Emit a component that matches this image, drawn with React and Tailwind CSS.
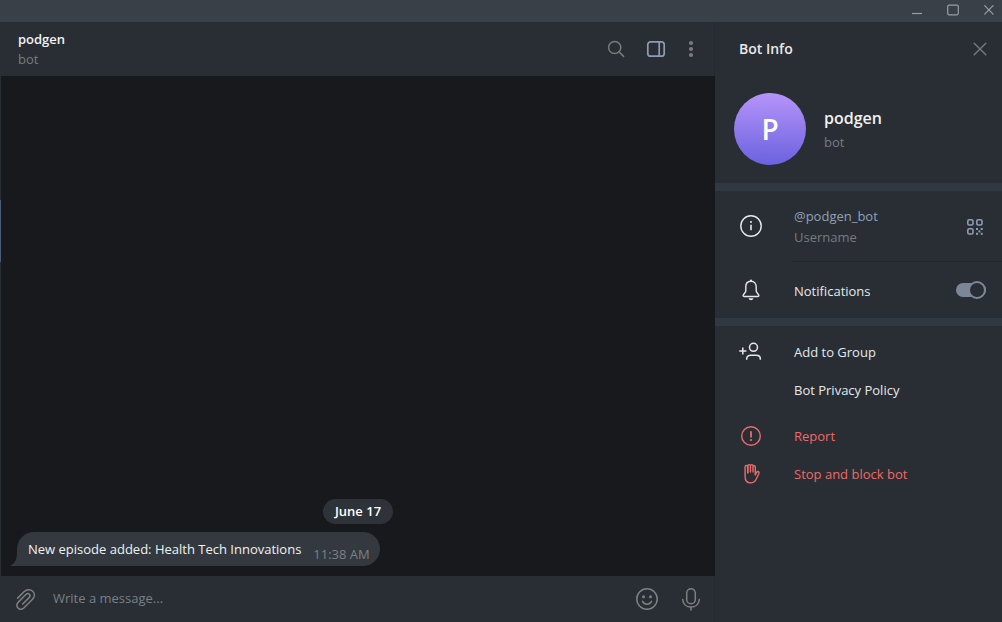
function Icon({ size = 24, className = "", children, strokeWidth = 1.4 }) {
  return (
    <svg
      width={size}
      height={size}
      viewBox={`0 0 ${size} ${size}`}
      fill="none"
      stroke="currentColor"
      strokeWidth={strokeWidth}
      strokeLinecap="round"
      strokeLinejoin="round"
      aria-hidden="true"
      className={`shrink-0 ${className}`}
    >
      {children}
    </svg>
  );
}

function TitleBar() {
  return (
    <div className="flex h-[22px] shrink-0 items-center justify-end gap-3 bg-[#3a4047] pr-px text-[#9a9ea3]">
      <button type="button" aria-label="Minimize" className="flex">
        <Icon strokeWidth={1.2}>
          <path d="M7 14.5h10" strokeLinecap="butt" />
        </Icon>
      </button>
      <button type="button" aria-label="Maximize" className="flex">
        <Icon strokeWidth={1.2}>
          <rect x="6.7" y="6.2" width="10.6" height="9.6" rx="1.2" />
        </Icon>
      </button>
      <button type="button" aria-label="Close window" className="flex">
        <Icon strokeWidth={1.2}>
          <path d="M7.7 6.7l8.4 8.4M16.1 6.7l-8.4 8.4" />
        </Icon>
      </button>
    </div>
  );
}

function ChatHeader() {
  return (
    <header className="flex h-[54px] shrink-0 items-center justify-between border-r border-[#24292d] bg-[#282e33] pr-[11px] pl-[17px]">
      <div className="text-[13px] leading-5">
        <h1 className="font-semibold text-[#f2f3f4]">podgen</h1>
        <p className="text-[#767c80]">bot</p>
      </div>
      <div className="flex items-center text-[#797c7f]">
        <button type="button" aria-label="Search" className="mr-4 flex">
          <Icon strokeWidth={1.5}>
            <circle cx="10.7" cy="10.5" r="6.1" />
            <path d="M15.2 15l4.4 4.4" />
          </Icon>
        </button>
        <button type="button" aria-label="Toggle info panel" className="mr-[11px] flex text-[#8b9db5]">
          <Icon strokeWidth={1.7}>
            <rect x="3.8" y="4.8" width="16.4" height="14.4" rx="2.8" />
            <path d="M15.2 4.8v14.4" />
          </Icon>
        </button>
        <button type="button" aria-label="More" className="flex">
          <Icon>
            <g fill="currentColor" stroke="none">
              <circle cx="12" cy="6" r="2.1" />
              <circle cx="12" cy="12" r="2.1" />
              <circle cx="12" cy="18" r="2.1" />
            </g>
          </Icon>
        </button>
      </div>
    </header>
  );
}

function Messages() {
  return (
    <main className="flex min-h-0 flex-1 flex-col justify-end bg-[#18191d] pr-4 pb-[10px] pl-4">
      <time className="mb-2 self-center rounded-full bg-[#2d3338] px-3 text-[13px] leading-[25px] font-semibold text-white">
        June 17
      </time>
      <div className="relative flex h-[34px] items-start self-start rounded-r-[17px] rounded-tl-[17px] bg-[#33393f] pt-[7px] pr-[10px] pl-[11px] text-[13px] leading-5">
        <svg
          width="7"
          height="18"
          viewBox="0 0 7 18"
          aria-hidden="true"
          className="absolute bottom-0 -left-[6px] text-[#33393f]"
        >
          <path d="M6 0V18H0.6C-0.2 18 -0.2 17.3 0.5 16.9C4.4 14.6 6 11 6 4H7V18H6Z" fill="currentColor" />
        </svg>
        <p className="text-[#f0f1f2]">New episode added: Health Tech Innovations</p>
        <time className="ml-3 pt-[5px] text-[#7a8085]">11:38 AM</time>
      </div>
    </main>
  );
}

function Composer() {
  return (
    <form className="flex h-[46px] shrink-0 items-center border-r border-[#24292d] bg-[#282e33] pr-[11px] pl-3 text-[#7e8183]">
      <button type="button" aria-label="Attach file" className="mr-4 flex">
        <Icon strokeWidth={1.5}>
          <path
            transform="translate(0.4 1.1)"
            d="M4.2 10L10.6 3.6C13.4 1 17.3 1.1 19.3 3.2C21.8 5.7 21.2 9 19.1 11.1L10.6 19.6C8.7 21.4 6.2 21.5 4.6 19.9C2.9 18.2 3 15.9 4.9 14L12.5 6.4C13.7 5.3 15 5.3 15.9 6.2C16.8 7.1 16.8 8.4 15.7 9.5L9.3 15.9"
          />
        </Icon>
      </button>
      <input
        type="text"
        aria-label="Message"
        placeholder="Write a message..."
        className="min-w-0 flex-1 bg-transparent text-[13px] text-[#f0f1f2] outline-none placeholder:text-[#7a8085]"
      />
      <button type="button" aria-label="Emoji" className="mr-5 ml-4 flex">
        <Icon strokeWidth={1.5}>
          <circle cx="12" cy="12" r="10.2" />
          <path d="M7.5 14.3c1 2 2.6 2.9 4.5 2.9s3.5-.9 4.5-2.9" />
          <g fill="currentColor" stroke="none">
            <circle cx="8.5" cy="9.8" r="1.5" />
            <circle cx="15.5" cy="9.8" r="1.5" />
          </g>
        </Icon>
      </button>
      <button type="button" aria-label="Record voice message" className="flex">
        <Icon strokeWidth={1.5}>
          <rect x="7.7" y="1.7" width="8.6" height="15" rx="4.3" />
          <path d="M3.7 12.500c.3 4.4 3.6 7.5 8.3 7.5s8-3.1 8.3-7.5M12 20v3" />
        </Icon>
      </button>
    </form>
  );
}

function ActionRow({ label, danger, children }) {
  return (
    <button
      type="button"
      className={`flex h-[38px] w-full items-center gap-[31px] pl-6 text-left text-[13px] leading-5 ${
        danger ? "text-[#ec6b6b]" : "text-[#e6e8e9]"
      }`}
    >
      <span className="flex size-6 shrink-0">{children}</span>
      {label}
    </button>
  );
}

function InfoPanel() {
  return (
    <aside aria-label="Bot Info" className="flex w-[287px] shrink-0 flex-col bg-[#282e33]">
      <header className="flex h-[54px] items-center justify-between pr-[10px] pl-6">
        <h2 className="text-[14px] leading-5 font-semibold text-[#e9eaeb]">Bot Info</h2>
        <button type="button" aria-label="Close panel" className="flex text-[#75797c]">
          <Icon>
            <path d="M6.2 6.2l11.6 11.6M17.8 6.2L6.2 17.8" />
          </Icon>
        </button>
      </header>

      <section className="flex items-center gap-[18px] px-[19px] pt-[17px] pb-[18px]">
        <div className="flex size-[72px] items-center justify-center rounded-full bg-linear-to-b from-[#b694f9] to-[#6c61df] text-[28px] font-semibold text-white">
          P
        </div>
        <div className="pt-[2px]">
          <h3 className="text-[16px] leading-6 font-semibold text-[#f0f1f2]">podgen</h3>
          <p className="text-[13px] leading-6 text-[#767c80]">bot</p>
        </div>
      </section>

      <div className="h-2 shrink-0 bg-[#303941]" />

      <section>
        <div className="flex h-[70px] items-center pr-[15px] pl-6">
          <Icon className="mr-[31px] text-[#e6e8e9]">
            <circle cx="12" cy="12" r="10.2" />
            <path d="M12 10.7v5.5" strokeLinecap="butt" strokeWidth="1.6" />
            <circle cx="12" cy="8" r="1" fill="currentColor" stroke="none" />
          </Icon>
          <div className="flex-1 pt-[2px] text-[13px] leading-[21px]">
            <a href="#podgen_bot" className="block text-[#92a1b9]">
              @podgen_bot
            </a>
            <p className="text-[#767c80]">Username</p>
          </div>
          <button type="button" aria-label="Show QR code" className="flex text-[#8f9db2]">
            <Icon strokeWidth={1.6}>
              <rect x="4.8" y="5.8" width="5.2" height="5.2" rx="1.4" />
              <rect x="13.8" y="5.8" width="5.2" height="5.2" rx="1.4" />
              <rect x="4.8" y="14.8" width="5.2" height="5.2" rx="1.4" />
              <g fill="currentColor" stroke="none">
                <rect x="13" y="14" width="2" height="2" />
                <rect x="17.7" y="14" width="2" height="2" />
                <rect x="15.4" y="16.4" width="2" height="2" />
                <rect x="13" y="18.8" width="2" height="2" />
                <rect x="17.7" y="18.8" width="2" height="2" />
              </g>
            </Icon>
          </button>
        </div>
        <div className="ml-[77px] h-px bg-[#23282c]" />
        <label className="flex h-14 items-center pr-4 pl-6 text-[13px] leading-5 text-[#e6e8e9]">
          <Icon className="mr-[31px]">
            <path d="M12 3.3C8.6 3.3 6.8 5.7 6.8 8.8V13C6.8 14.6 4.1 16.3 4.1 17.6C4.1 18.2 4.5 18.5 5.2 18.5H18.8C19.5 18.5 19.9 18.2 19.9 17.6C19.9 16.3 17.2 14.6 17.2 13V8.8C17.2 5.7 15.4 3.3 12 3.3Z" />
            <circle cx="12" cy="2.7" r="1.1" fill="currentColor" stroke="none" />
            <path d="M9.6 20.3H14.4C14 21.7 13.2 22.2 12 22.2S10 21.7 9.6 20.3Z" fill="currentColor" stroke="none" />
          </Icon>
          <span className="flex-1 pt-[2px]">Notifications</span>
          <input
            type="checkbox"
            defaultChecked
            className="relative h-[18px] w-[30px] appearance-none before:absolute before:inset-x-0 before:inset-y-[2px] before:rounded-full before:bg-[#7b8699] after:absolute after:top-0 after:left-0 after:size-[18px] after:rounded-full after:border-2 after:border-[#7b8699] after:bg-[#282e33] checked:after:left-3"
          />
        </label>
      </section>

      <div className="h-2 shrink-0 bg-[#303941]" />

      <nav aria-label="Bot actions" className="pt-[7px]">
        <ActionRow label="Add to Group">
          <Icon strokeWidth={1.5}>
            <path d="M.2 11h7.2M3.8 7.4v7.2" strokeLinecap="butt" />
            <circle cx="14.5" cy="7.3" r="4" />
            <path d="M7.7 19.7V18.5C7.7 16.3 9.7 15.2 11.8 15.2H17.2C19.5 15.2 21.3 16.4 21.3 18.5V19.7" strokeLinecap="butt" />
          </Icon>
        </ActionRow>
        <ActionRow label="Bot Privacy Policy" />
        <div className="h-2" />
        <ActionRow label="Report" danger>
          <Icon>
            <circle cx="12" cy="12" r="9.3" />
            <path d="M12 8v4.8" strokeWidth="1.8" />
            <circle cx="12" cy="16" r="1.1" fill="currentColor" stroke="none" />
          </Icon>
        </ActionRow>
        <ActionRow label="Stop and block bot" danger>
          <Icon strokeWidth={1.4}>
            <path d="M8.8 11V4.700C8.8 3.9 8.2 3.5 7.5 3.5S6.1 3.9 6.1 4.9V14.5C6.1 18.6 8.3 20.9 11.7 20.9C14.5 20.9 15.9 19.7 17 17.5L19.8 11.7C20.3 10.6 20.1 9.9 19.4 9.6C18.6 9.3 18.1 9.6 17.6 10.4L16.3 12.7" />
            <path d="M8.8 10.5V3.8C8.8 2.9 9.5 2.6 10.2 2.6S11.5 2.9 11.5 3.8V10M11.5 10V3.8C11.5 2.9 12.100 2.6 12.8 2.6S14 2.9 14 3.7V10M14 10V5C14 4.2 14.5 3.8 15.1 3.8S16.3 4.2 16.3 5V12.7" />
          </Icon>
        </ActionRow>
      </nav>
    </aside>
  );
}

export default function App() {
  return (
    <div className="flex h-screen flex-col overflow-hidden bg-[#282e33] font-['Open_Sans','Noto_Sans',sans-serif]">
      <TitleBar />
      <div className="flex min-h-0 flex-1">
        <div className="w-px shrink-0 bg-[#282e33] pt-[178px]">
          <div className="h-[62px] bg-[#4c5b75]" />
        </div>
        <div className="flex min-w-0 flex-1 flex-col">
          <ChatHeader />
          <Messages />
          <Composer />
        </div>
        <InfoPanel />
      </div>
    </div>
  );
}
